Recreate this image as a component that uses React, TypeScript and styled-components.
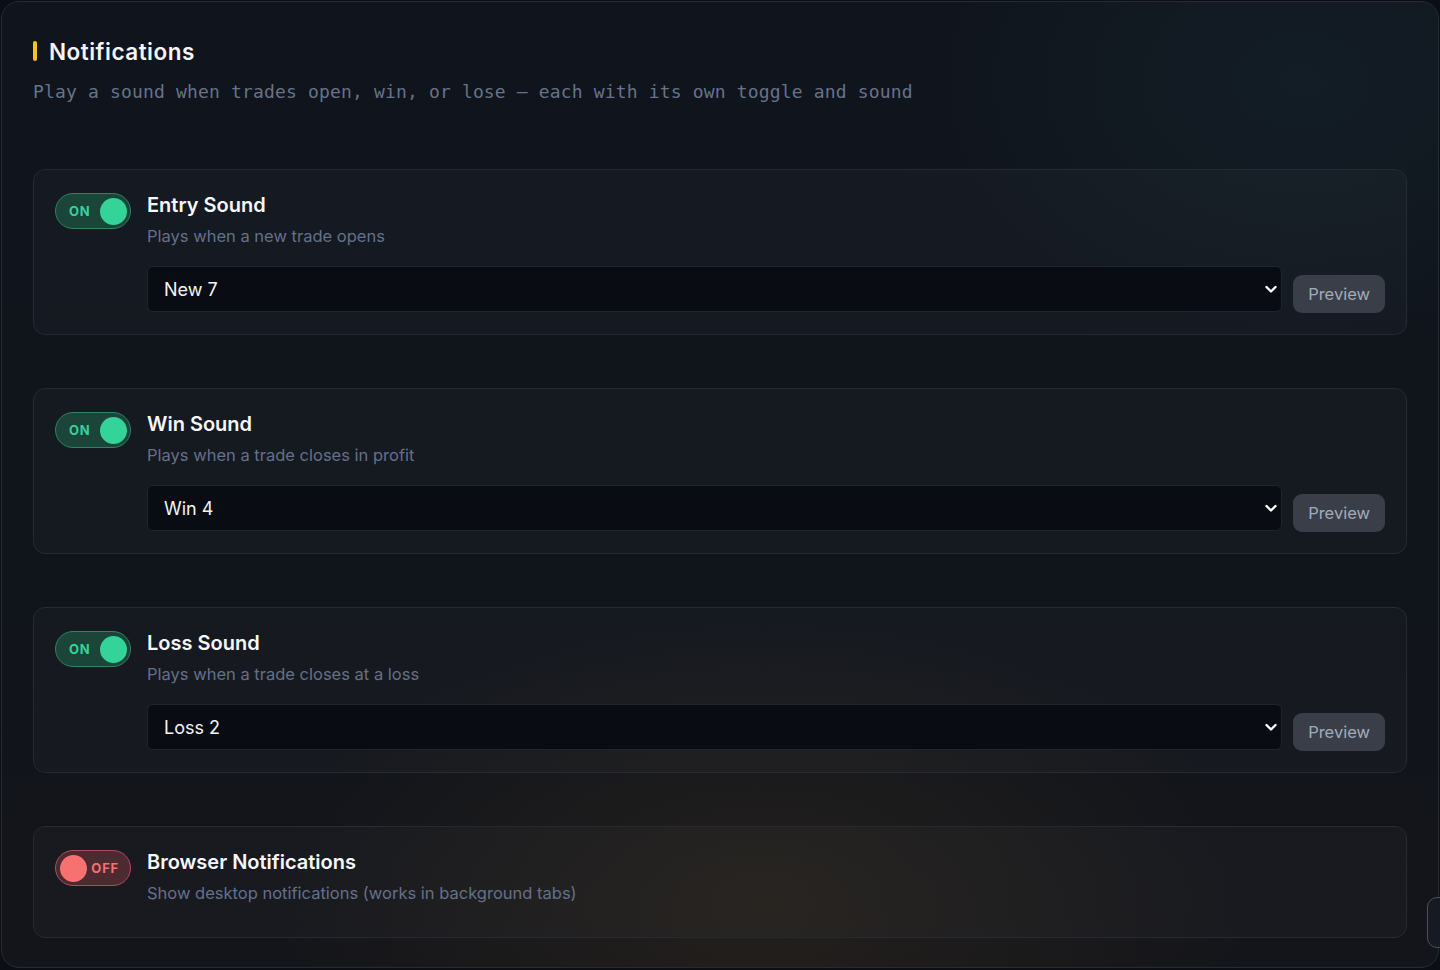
import React from "react";
import styled, { createGlobalStyle } from "styled-components";

const Global = createGlobalStyle`
  html, body { margin: 0; padding: 0; background: #0b0e14; }
  body { font-family: Inter, "Noto Sans", sans-serif; color: #e6e9ef; }
  * { box-sizing: border-box; }
`;

const Panel = styled.section`
  margin: 1px;
  width: 1438px;
  height: 967px;
  border: 1px solid #262b34;
  border-radius: 18px;
  padding: 35px 31px 0 31px;
  background:
    radial-gradient(ellipse 700px 420px at 760px 900px, rgba(120, 90, 40, 0.16), transparent 70%),
    radial-gradient(ellipse 600px 420px at 1300px 80px, rgba(30, 70, 80, 0.18), transparent 70%),
    linear-gradient(180deg, #10141c 0%, #10141b 60%, #14151a 100%);
  overflow: hidden;
`;

const Header = styled.header`
  display: flex;
  flex-direction: column;
  gap: 14px;
  margin-bottom: 64px;
`;

const TitleRow = styled.div`
  display: flex;
  align-items: center;
  gap: 12px;
  height: 28px;
`;

const Accent = styled.span`
  width: 4px;
  height: 20px;
  border-radius: 2px;
  background: #fbbf24;
`;

const Title = styled.h1`
  margin: 0;
  font-size: 22.5px;
  font-weight: 600;
  color: #f3f5f8;
  letter-spacing: 0.5px;
`;

const Subtitle = styled.p`
  margin: 0;
  font-family: "DejaVu Sans Mono", "Liberation Mono", monospace;
  font-size: 18px;
  letter-spacing: 0.16px;
  line-height: 26px;
  color: #66738a;
`;

const List = styled.div`
  display: flex;
  flex-direction: column;
  gap: 53px;
`;

const Card = styled.div<{ $tall?: boolean }>`
  display: flex;
  gap: 16px;
  padding: 23px 21px ${(p) => (p.$tall ? "22px" : "32px")} 21px;
  border: 1px solid #262a33;
  border-radius: 12px;
  background: rgba(255, 255, 255, 0.025);
`;

const Toggle = styled.div<{ $on: boolean }>`
  flex: none;
  width: 76px;
  height: 36px;
  border-radius: 18px;
  display: flex;
  align-items: center;
  flex-direction: ${(p) => (p.$on ? "row" : "row-reverse")};
  justify-content: space-between;
  padding: ${(p) => (p.$on ? "0 3px 0 13px" : "0 11px 0 4px")};
  border: 1.5px solid ${(p) => (p.$on ? "#2c8463" : "#b04e58")};
  background: ${(p) => (p.$on ? "#1b4539" : "#4b2a31")};
`;

const ToggleLabel = styled.span<{ $on: boolean }>`
  font-size: 13px;
  font-weight: 700;
  letter-spacing: 0.8px;
  color: ${(p) => (p.$on ? "#34d399" : "#f87171")};
`;

const Knob = styled.span<{ $on: boolean }>`
  width: 27px;
  height: 27px;
  border-radius: 50%;
  background: ${(p) => (p.$on ? "#34d399" : "#f87171")};
`;

const Body = styled.div`
  flex: 1;
  display: flex;
  flex-direction: column;
`;

const CardTitle = styled.h2`
  margin: 0;
  font-size: 20px;
  font-weight: 600;
  line-height: 24px;
  color: #f5f7fa;
`;

const CardDesc = styled.p`
  margin: 7px 0 0 0;
  font-size: 16.5px;
  line-height: 24px;
  color: #65708a;
  letter-spacing: 0;
`;

const Controls = styled.div`
  display: flex;
  align-items: flex-end;
  gap: 11px;
  margin-top: 18px;
`;

const SelectWrap = styled.div`
  position: relative;
  flex: 1;
`;

const Select = styled.select`
  appearance: none;
  -webkit-appearance: none;
  width: 100%;
  height: 46px;
  padding: 0 40px 0 16px;
  border: 1px solid #1f242e;
  border-radius: 6px;
  background: #090c13;
  color: #f2f4f7;
  font-family: Inter, "Noto Sans", sans-serif;
  font-size: 18px;
  outline: none;
`;

const Chevron = styled.svg`
  position: absolute;
  right: 4px;
  top: 50%;
  transform: translateY(-50%);
  pointer-events: none;
`;

const PreviewButton = styled.button`
  flex: none;
  height: 38px;
  padding: 0 15px;
  border: none;
  border-radius: 9px;
  background: #3a3e48;
  color: #a1abbd;
  font-family: Inter, "Noto Sans", sans-serif;
  font-size: 16.5px;
  margin-bottom: -1px;
`;

const EdgeTab = styled.div`
  position: fixed;
  right: -40px;
  top: 897px;
  width: 53px;
  height: 51px;
  border-radius: 10px;
  border: 1px solid #4a505c;
  background: #161a22;
`;

type SoundRow = {
  title: string;
  desc: string;
  on: boolean;
  value?: string;
  options?: string[];
};

const rows: SoundRow[] = [
  { title: "Entry Sound", desc: "Plays when a new trade opens", on: true, value: "New 7", options: ["New 1", "New 2", "New 3", "New 4", "New 5", "New 6", "New 7"] },
  { title: "Win Sound", desc: "Plays when a trade closes in profit", on: true, value: "Win 4", options: ["Win 1", "Win 2", "Win 3", "Win 4"] },
  { title: "Loss Sound", desc: "Plays when a trade closes at a loss", on: true, value: "Loss 2", options: ["Loss 1", "Loss 2", "Loss 3"] },
  { title: "Browser Notifications", desc: "Show desktop notifications (works in background tabs)", on: false },
];

function Switch({ on }: { on: boolean }) {
  return (
    <Toggle $on={on}>
      <ToggleLabel $on={on}>{on ? "ON" : "OFF"}</ToggleLabel>
      <Knob $on={on} />
    </Toggle>
  );
}

export default function App() {
  return (
    <>
      <Global />
      <Panel>
        <Header>
          <TitleRow>
            <Accent />
            <Title>Notifications</Title>
          </TitleRow>
          <Subtitle>Play a sound when trades open, win, or lose — each with its own toggle and sound</Subtitle>
        </Header>
        <List>
          {rows.map((r) => (
            <Card key={r.title} $tall={!!r.options}>
              <Switch on={r.on} />
              <Body>
                <CardTitle>{r.title}</CardTitle>
                <CardDesc>{r.desc}</CardDesc>
                {r.options && (
                  <Controls>
                    <SelectWrap>
                      <Select defaultValue={r.value}>
                        {r.options.map((o) => (
                          <option key={o} value={o}>
                            {o}
                          </option>
                        ))}
                      </Select>
                      <Chevron width="14" height="14" viewBox="0 0 14 14" fill="none">
                        <path d="M2.5 5 L7 9.5 L11.5 5" stroke="#ffffff" strokeWidth="2.4" strokeLinecap="round" strokeLinejoin="round" />
                      </Chevron>
                    </SelectWrap>
                    <PreviewButton>Preview</PreviewButton>
                  </Controls>
                )}
              </Body>
            </Card>
          ))}
        </List>
      </Panel>
      <EdgeTab />
    </>
  );
}
